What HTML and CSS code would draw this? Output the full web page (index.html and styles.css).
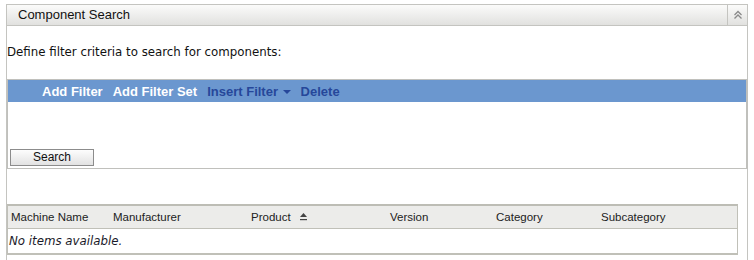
FILE: index.html
```html
<!DOCTYPE html>
<html lang="en">
<head>
  <meta charset="UTF-8" />
  <title>Component Search</title>
  <link rel="stylesheet" href="styles.css">
</head>
<body>
  <div class="panel">
    <div class="panel-header">
      <span class="panel-title">Component Search</span>
      <button class="collapse-btn" title="Collapse">
        <svg width="10" height="10" viewBox="0 0 10 10">
          <path d="M1.5 5 L5 1.5 L8.5 5 M1.5 8.5 L5 5 L8.5 8.5" fill="none" stroke="#8a8a8a" stroke-width="1.3"/>
        </svg>
      </button>
    </div>

    <p class="intro">Define filter criteria to search for components:</p>

    <div class="filter-box">
      <div class="filter-bar">
        <a class="light">Add Filter</a>
        <a class="light">Add Filter Set</a>
        <a class="dark">Insert Filter <span class="caret"></span></a>
        <a class="dark">Delete</a>
      </div>
      <div class="filter-body">
        <button class="search-btn">Search</button>
      </div>
    </div>

    <div class="results">
      <div class="results-head">
        <span>Machine Name</span>
        <span>Manufacturer</span>
        <span>Product
          <svg class="sort-icon" width="9" height="8" viewBox="0 0 9 8">
            <path d="M4.5 0 L8 4 L1 4 Z" fill="#444"/>
            <rect x="1" y="6" width="7" height="1.2" fill="#444"/>
          </svg>
        </span>
        <span>Version</span>
        <span>Category</span>
        <span>Subcategory</span>
      </div>
      <div class="results-empty">No items available.</div>
    </div>
  </div>
</body>
</html>
```

FILE: styles.css
```css
body {
  margin: 0;
  padding-top: 4px;
  font-family: 'Liberation Sans', Arial, sans-serif;
  color: #1a1a1a;
  background: #fff;
  overflow: hidden;
}
.panel {
  margin: 0 6px;
  border: 1px solid #c4c4c0;
  border-bottom: none;
  height: 256px;
  box-sizing: border-box;
}
.panel-header {
  display: flex;
  align-items: stretch;
  height: 20px;
  border-bottom: 1px solid #c4c4c0;
  background: linear-gradient(#fbfbfa, #e1e1df);
}
.panel-title {
  flex: 1;
  padding-left: 11px;
  font-size: 13px;
  line-height: 20px;
  color: #111;
}
.collapse-btn {
  width: 20px;
  border: none;
  border-left: 1px solid #c4c4c0;
  background: none;
  padding: 0;
  display: flex;
  align-items: center;
  justify-content: center;
}
.intro {
  margin: 19px 0 0 0;
  font-family: 'DejaVu Sans', Verdana, sans-serif;
  font-size: 11.8px;
  line-height: 15px;
  color: #111;
}
.filter-box {
  margin-top: 19px;
  border: 1px solid #c0c0bc;
  border-right: 2px solid #c0c0bc;
  margin-right: -1px;
}
.filter-bar {
  display: flex;
  align-items: center;
  gap: 10px;
  height: 22px;
  padding-left: 34px;
  background-color: #6b97cf;
  font-size: 13px;
  font-weight: bold;
}
.filter-bar .light {
  color: #ffffff;
}
.filter-bar .dark {
  color: #26479a;
}
.caret {
  display: inline-block;
  border-left: 4px solid transparent;
  border-right: 4px solid transparent;
  border-top: 4px solid #26479a;
  vertical-align: middle;
  margin-left: 1px;
}
.filter-body {
  height: 64px;
  display: flex;
  align-items: flex-end;
  padding: 0 0 2px 2px;
}
.search-btn {
  width: 84px;
  height: 17px;
  padding: 0;
  border: 1px solid #8c8c8c;
  background: linear-gradient(#fdfdfd, #e2e2e2);
  font-family: 'Liberation Sans', Arial, sans-serif;
  font-size: 12px;
  color: #111;
  line-height: 15px;
}
.results {
  margin-top: 35px;
  width: 731px;
  border: 1px solid #c0c0b8;
  border-top: 2px solid #bdbdb5;
  border-bottom: 2px solid #c0c0b8;
  box-sizing: border-box;
}
.results-head {
  display: grid;
  grid-template-columns: 102px 138px 139px 106px 105px 1fr;
  height: 22px;
  align-items: center;
  background-color: #ececea;
  border-bottom: 1px solid #c0c0b8;
  font-size: 11.5px;
  color: #222;
}
.results-head span {
  padding-left: 3px;
}
.sort-icon {
  margin-left: 5px;
}
.results-empty {
  height: 24px;
  line-height: 24px;
  padding-left: 1px;
  font-family: 'DejaVu Sans', Verdana, sans-serif;
  font-size: 11.8px;
  font-style: italic;
  color: #1a1a2a;
}
```
